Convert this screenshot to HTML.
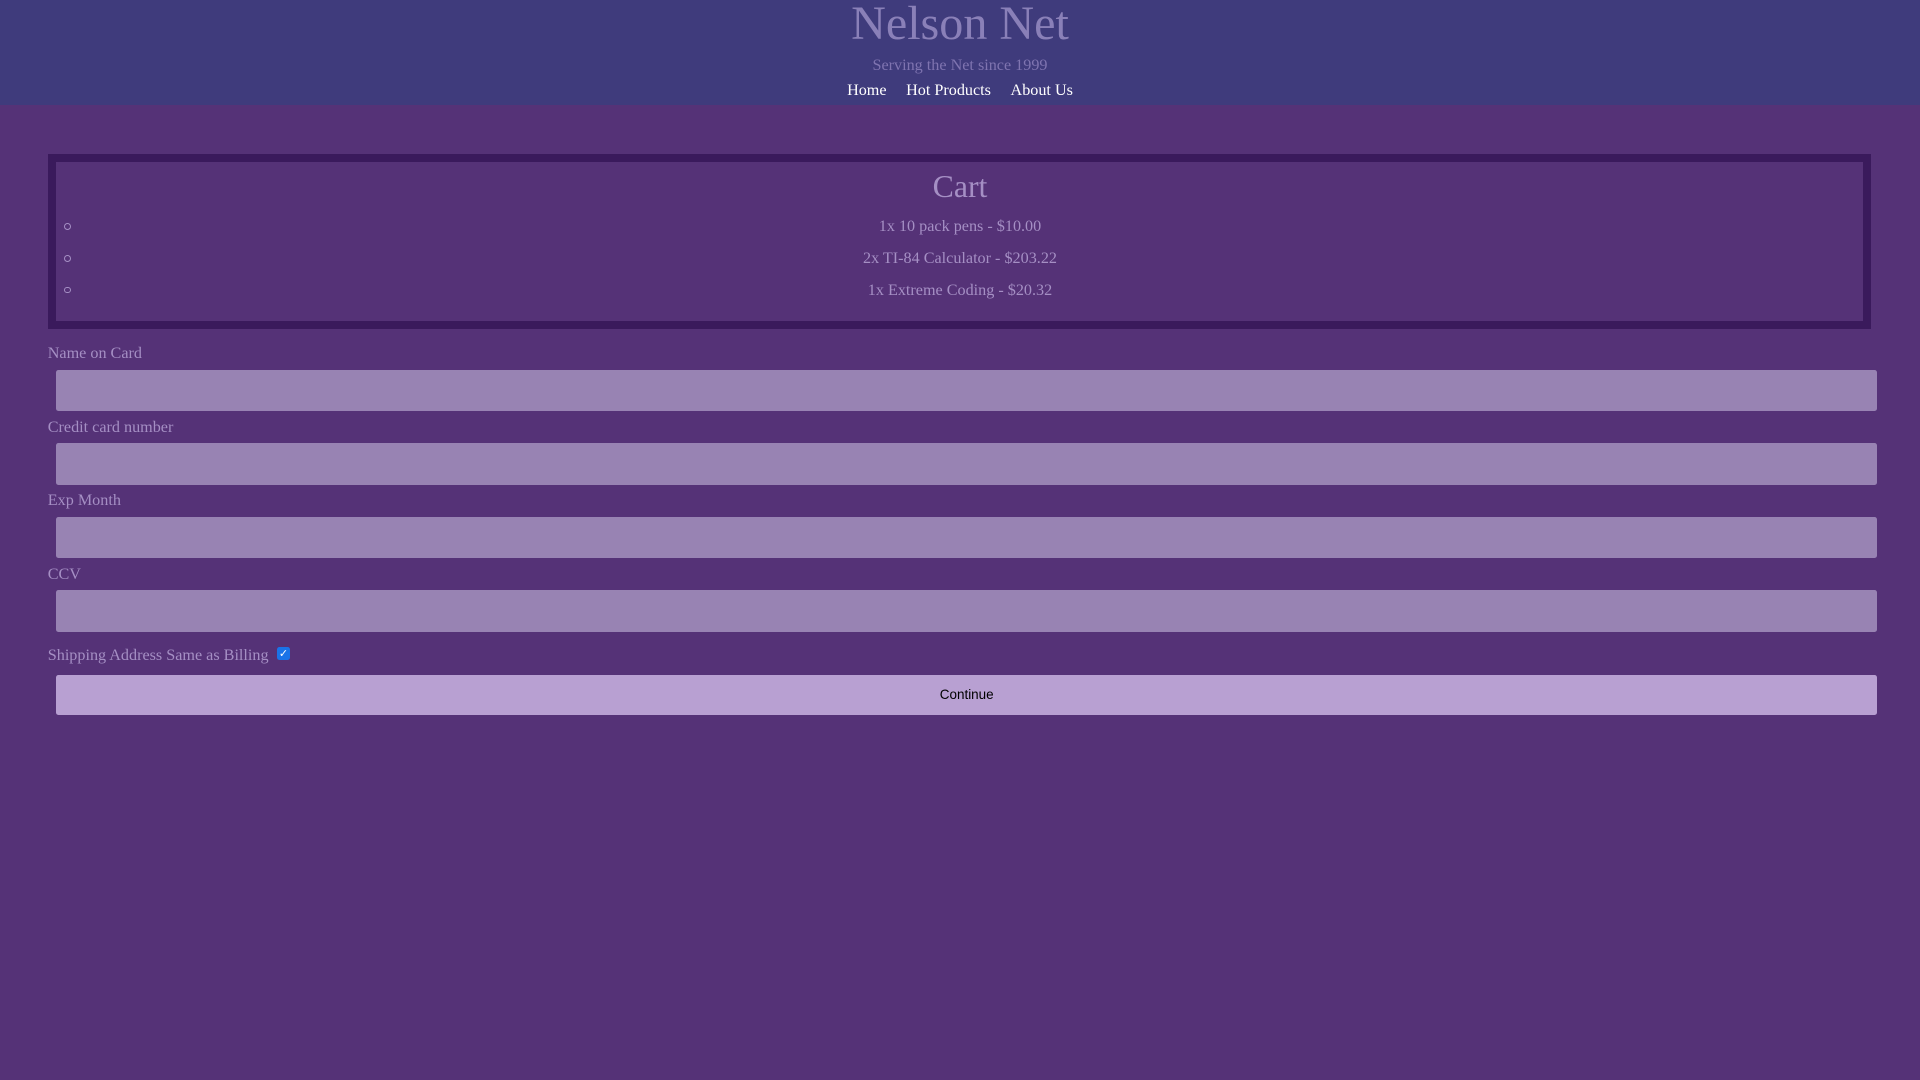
<!DOCTYPE html>
<html><head><style>
html,body{margin:0;padding:0}
body{width:1920px;height:1080px;background:#553277;overflow:hidden;font-family:"Liberation Serif",serif}
#w{zoom:1.22449;position:relative;width:1568px;height:882px}
.a{position:absolute;white-space:nowrap}
.c{left:0;width:1568px;text-align:center}
.lab{left:39px;font-size:13.2px;color:#a58fc4}
.in{position:absolute;left:46px;width:1487px;height:34px;background:#9883b3;border-radius:2px}
.it{font-size:13.2px;color:#a58fc4}
.bul{position:absolute;left:52px;width:4px;height:4px;border:1px solid #a58fc4;border-radius:50%}
</style></head><body><div id="w">
<div class="a" style="left:0;top:0;width:1568px;height:86px;background:#3f3b7c"></div>
<div class="a c" style="top:-3px;font-size:39.3px;line-height:46px;color:#8a80b8">Nelson Net</div>
<div class="a c" style="top:46px;font-size:13.2px;line-height:16px;color:#7f74b0">Serving the Net since 1999</div>
<div class="a c" style="top:66px;font-size:13.2px;line-height:16px;color:#fff;word-spacing:0"><span>Home</span><span style="margin-left:16px">Hot Products</span><span style="margin-left:16px">About Us</span></div>
<div class="a" style="left:39px;top:126px;width:1476px;height:130px;border:7px solid #3a1a5c"></div>
<div class="a c" style="top:136px;font-size:26px;line-height:32px;color:#a58fc4">Cart</div>
<div class="a c it" style="top:178px">1x 10 pack pens - $10.00</div>
<div class="a c it" style="top:204px">2x TI-84 Calculator - $203.22</div>
<div class="a c it" style="top:230px">1x Extreme Coding - $20.32</div>
<div class="bul" style="top:182px"></div><div class="bul" style="top:208px"></div><div class="bul" style="top:234px"></div>
<div class="a lab" style="top:282px">Name on Card</div><div class="in" style="top:302px"></div>
<div class="a lab" style="top:342px">Credit card number</div><div class="in" style="top:362px"></div>
<div class="a lab" style="top:402px">Exp Month</div><div class="in" style="top:422px"></div>
<div class="a lab" style="top:462px">CCV</div><div class="in" style="top:482px"></div>
<div class="a lab" style="top:528px">Shipping Address Same as Billing</div>
<div class="a" style="left:226px;top:528px;width:11px;height:11px;background:#1a73e8;border-radius:2px;color:#fff;font:bold 9px/11px 'DejaVu Sans',sans-serif;text-align:center">✓</div>
<div class="a" style="left:46px;top:551px;width:1487px;height:33px;background:#b8a0d2;border-radius:2px;text-align:center;font:11px/33px 'Liberation Sans',sans-serif;color:#000">Continue</div>
</div></body></html>
